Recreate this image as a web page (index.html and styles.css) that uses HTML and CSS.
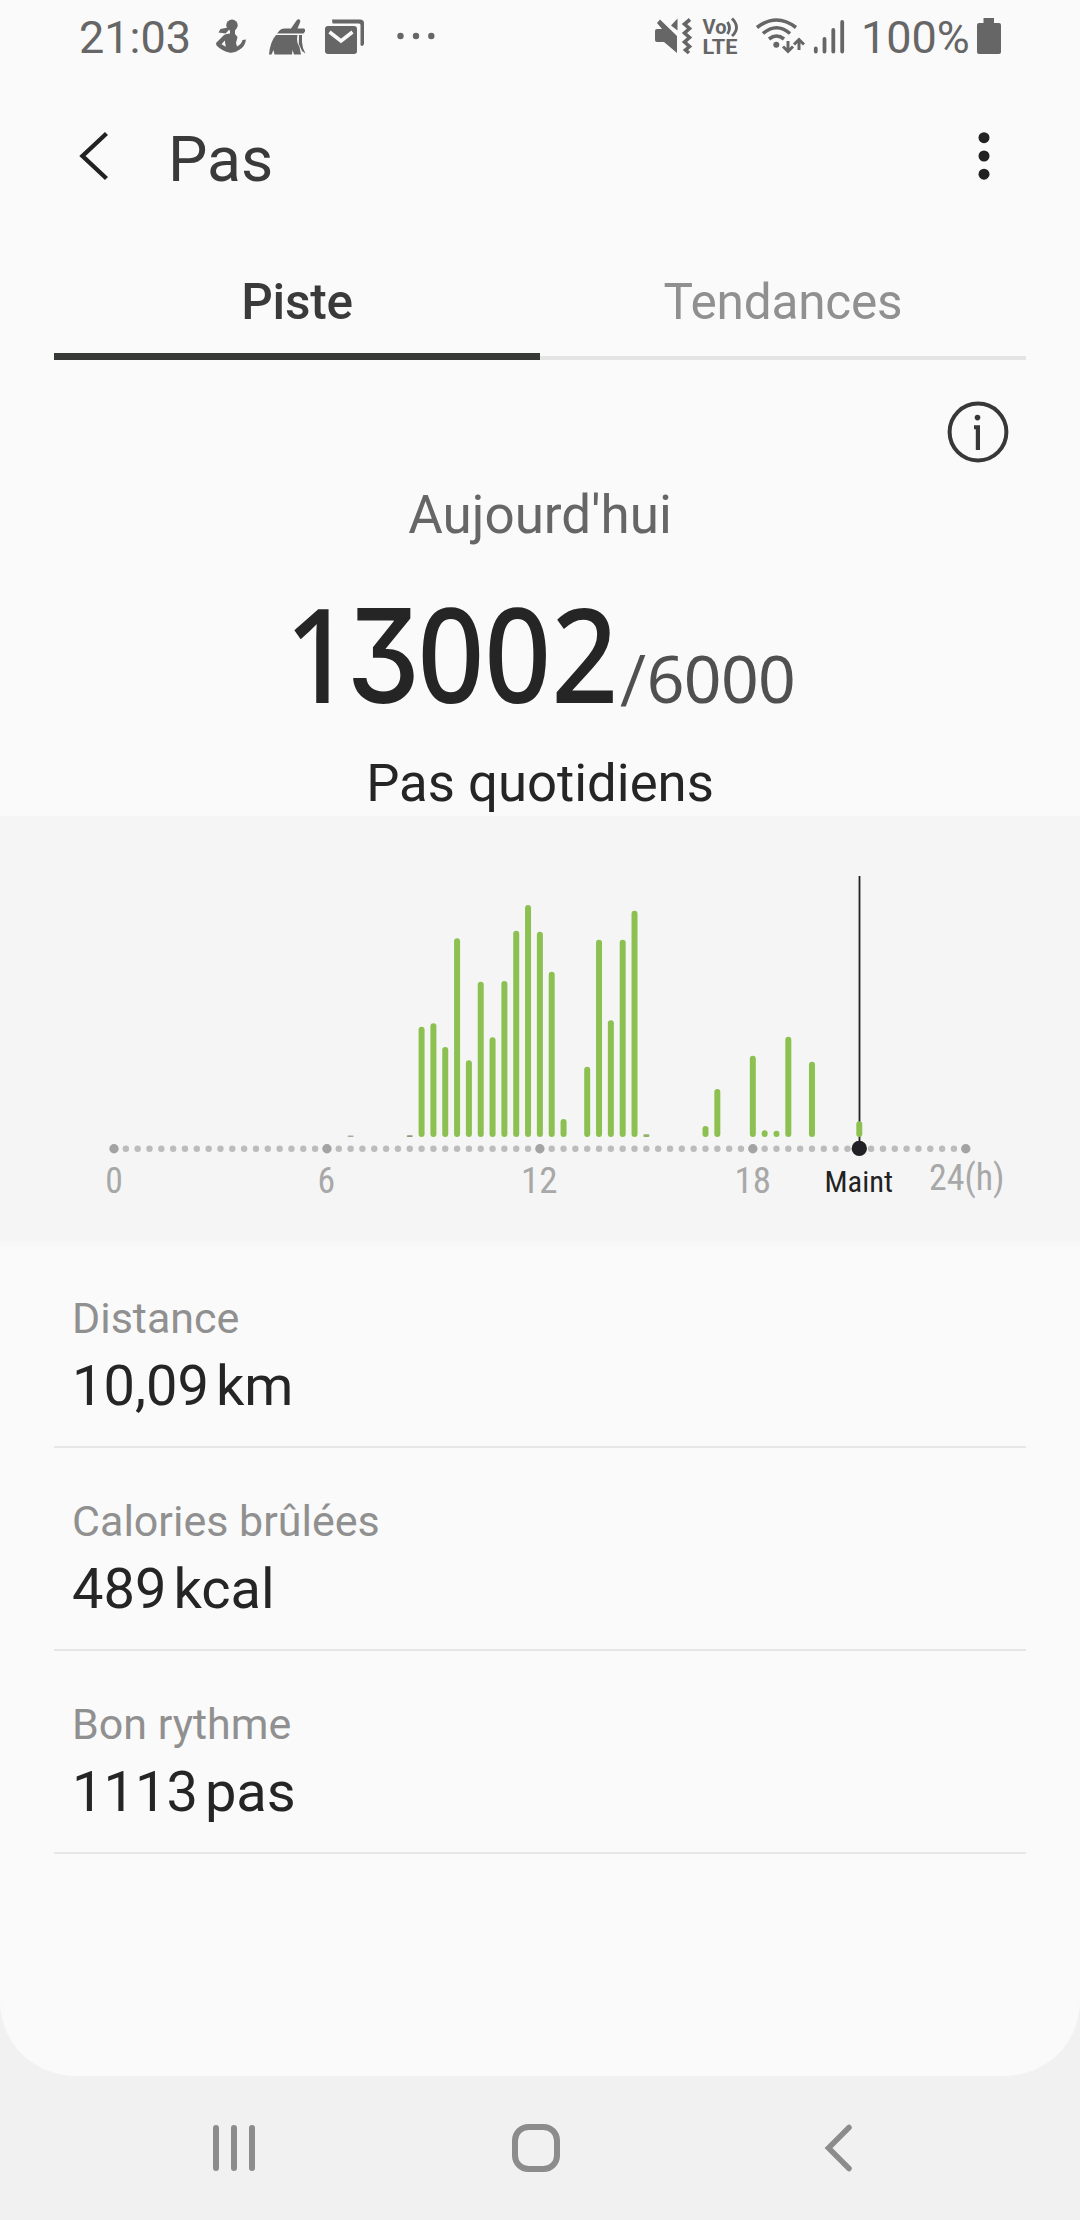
FILE: index.html
```html
<!DOCTYPE html>
<html lang="fr">
<head>
<meta charset="utf-8">
<title>Pas</title>
<link rel="stylesheet" href="styles.css">
</head>
<body>
<div class="screen">
  <main class="panel">
    <div class="status">
      <span class="clock">21:03</span>
      <svg class="status-left" viewBox="210 0 230 75" fill="#666">
        <circle cx="232" cy="25.200" r="5.700"/>
        <path d="M228 27.500 L220.500 29 L218.500 32.500 L225.500 33.500 L228.500 30.500 Z"/>
        <path d="M230 29 H235 V34 L237.500 37 L236 43 L237 46.500 Q241.500 44 242.500 40 L246 39.500 Q245 47 239 50 Q234 53.500 229 52.500 Q222 51 216.500 45.500 L216 43 L224 35 Q226 33.500 230 33.500 Z M224.800 40.500 L221.500 44.200 L225.800 46.800 Z" fill-rule="evenodd"/>
        <path d="M291 28.500 L296.500 20.500 Q298 18.500 299.500 19.500 Q301 20.500 300 22.500 L297.500 28.500 H304 Q305.500 29 305 31.500 L303.500 33.500 H277 L280 30 Q281.500 28.500 284 28.500 Z"/>
        <path d="M276 35 H297.500 Q296.500 39 297.500 43 L301 50 L299.500 47 L301 54.500 H294 L292.500 50 L292 54.500 H274.500 L273.500 50 L271.500 54.500 H269 Q270 42 276 35 Z"/>
        <path d="M299 35 H302 Q301.500 42 303 48 L305.500 53.500 L302 51 L298.800 44 Z"/>
        <path d="M332 19.500 H360 Q364 19.500 364 23 V44 Q363.500 46 361.500 46 L360.500 45 V25 Q360.500 23.500 359 23.500 H332.500 Z"/>
        <rect x="325" y="26" width="32" height="28" rx="3"/>
        <path d="M329.500 32 L341 41 L352.500 32" fill="none" stroke="#fafafa" stroke-width="3.600"/>
        <circle cx="400.500" cy="36" r="3.200"/><circle cx="416" cy="36" r="3.200"/><circle cx="431.300" cy="36" r="3.200"/>
      </svg>
      <svg class="status-right" viewBox="650 0 211 75" fill="#666">
        <path d="M655 31 Q655 29 657 29 H662 L657 23 L660 19.500 L677 36 V53 L664 42 H657 Q655 42 655 40 Z"/>
        <path d="M671 25.500 L677.500 18.500 V30.500 Z"/>
        <path d="M690 19.500 L684.500 24 L689.500 28.500 L684.500 33 L689.500 37.500 L684.500 42 L689.500 46.500 L685.500 50 L689 53" fill="none" stroke="#666" stroke-width="3.600"/>
        <text class="volte" x="702.500" y="33.500" textLength="24" lengthAdjust="spacingAndGlyphs">Vo</text>
        <text class="volte" x="702.500" y="53.500" textLength="35" lengthAdjust="spacingAndGlyphs">LTE</text>
        <g fill="none" stroke="#666" stroke-width="2.900">
          <path d="M727.500 22 Q731.500 28 727.500 34"/><path d="M732 18.500 Q741 27.500 732 36"/>
        </g>
        <g fill="none" stroke="#666" stroke-width="3.600">
          <path d="M757 27.500 Q776.500 12.500 796 27.500"/><path d="M763 33.500 Q776.500 22 790 33.500"/><path d="M769 39 Q776.500 33 784 39"/>
        </g>
        <circle cx="776.300" cy="44.800" r="3"/>
        <g fill="none" stroke="#666" stroke-width="3">
          <path d="M788 41 V51 M783 46.500 L788 51.500 L793 46.500"/><path d="M799 50 V40 M794 44.500 L799 39.500 L804 44.500"/>
        </g>
        <g stroke="#666" stroke-width="3.800" stroke-linecap="round"><path d="M815.800 48.500V51.500M824.500 39V51.500M833.300 30V51.500M842.200 22V51.500"/></g>
      </svg>
      <span class="percent">100%</span>
      <svg class="battery" viewBox="977 0 24 75" fill="#666"><path d="M983.500 18 H994 V23 H999 Q1001 23 1001 25 V52 Q1001 54 999 54 H979 Q977 54 977 52 V25 Q977 23 979 23 H983.500 Z"/></svg>
    </div>

    <header class="header">
      <svg class="back" viewBox="75 75 40 169"><path d="M106.500 133.500 L82.500 156 L106.500 178.500" fill="none" stroke="#222" stroke-width="4.400"/></svg>
      <h1 class="title">Pas</h1>
      <svg class="more" viewBox="970 75 28 169" fill="#222"><circle cx="984" cy="137.700" r="5.500"/><circle cx="984" cy="156" r="5.500"/><circle cx="984" cy="174.200" r="5.500"/></svg>
    </header>

    <nav class="tabs">
      <div class="tab tab-active">Piste</div>
      <div class="tab">Tendances</div>
    </nav>

    <section class="summary">
      <div class="info-row">
        <svg class="info" viewBox="946 400 64 64">
          <circle cx="978" cy="432" r="28.400" fill="none" stroke="#383838" stroke-width="4"/>
          <circle cx="977.500" cy="417.600" r="2.800" fill="#383838"/>
          <path d="M974 425.300 H980 V450 H975.800 V429.300 H974 Z" fill="#383838"/>
        </svg>
      </div>
      <p class="day">Aujourd'hui</p>
      <div class="count">
        <span class="steps">1<span class="flat">3</span>002</span>
        <span class="goal"><span class="slash">/</span>6000</span>
      </div>
      <p class="caption">Pas quotidiens</p>
    </section>

    <svg class="chart" viewBox="0 816 1080 431">
      <g id="ticks"></g>
      <path d="M859.500 876 V1148" stroke="#222226" stroke-width="1.800"/>
      <g id="bars" fill="#8cc152"></g>
      <circle cx="859.300" cy="1148.400" r="7.700" fill="#222226"/>
      <g class="axis">
        <text x="105.200" y="1193" textLength="17.600" lengthAdjust="spacingAndGlyphs">0</text>
        <text x="317.400" y="1193" textLength="17.600" lengthAdjust="spacingAndGlyphs">6</text>
        <text x="521" y="1193" textLength="36.500" lengthAdjust="spacingAndGlyphs">12</text>
        <text x="734.500" y="1193" textLength="36.500" lengthAdjust="spacingAndGlyphs">18</text>
        <text x="929" y="1190" textLength="75.500" lengthAdjust="spacingAndGlyphs">24(h)</text>
        <text class="now" x="824.500" y="1192.300" textLength="68.500" lengthAdjust="spacingAndGlyphs">Maint</text>
      </g>
    </svg>

    <ul class="stats">
      <li class="stat"><span class="label">Distance</span><span class="value">10,09<span class="unit">km</span></span></li>
      <li class="stat"><span class="label">Calories brûlées</span><span class="value">489<span class="unit">kcal</span></span></li>
      <li class="stat"><span class="label">Bon rythme</span><span class="value">1113<span class="unit">pas</span></span></li>
    </ul>
  </main>

  <footer class="navbar">
    <svg class="recents" viewBox="213 2124 42 48" fill="#8c8c8c"><rect x="213" y="2125" width="6" height="46" rx="3"/><rect x="231" y="2125" width="6" height="46" rx="3"/><rect x="249" y="2125" width="6" height="46" rx="3"/></svg>
    <svg class="home" viewBox="512 2124 48 48"><rect x="515" y="2127" width="42" height="42" rx="13.500" fill="none" stroke="#8c8c8c" stroke-width="6"/></svg>
    <svg class="nav-back" viewBox="824 2124 28 48"><path d="M849 2127.500 L828.500 2148 L849 2168.500" fill="none" stroke="#8c8c8c" stroke-width="5.500" stroke-linecap="round"/></svg>
  </footer>
</div>
<script src="chart.js"></script>
</body>
</html>
```
FILE: chart.js
```js
// One slot every 20 minutes, from 0 h (slot 0) to 24 h (slot 72).
const NS = "http://www.w3.org/2000/svg";
const slotX = (i) => 114 + i * 11.83;
const BASE = 1137;

// [slot, bar height]
const bars = [
  [26, 110.3], [27, 113.7], [28, 90], [29, 198.7], [30, 76.7], [31, 155.3],
  [32, 99.7], [33, 156], [34, 206.3], [35, 232], [36, 205.3], [37, 165.3],
  [38, 18], [40, 70.3], [41, 197.3], [42, 116.7], [43, 197.3], [44, 226.3],
  [50, 11], [51, 48], [54, 81.3], [55, 6.7], [56, 6.3], [57, 100.3],
  [59, 75.3], [63, 15.7]
];
const traces = [[20, 1.6, "#a5ad99"], [25, 1.8, "#8a9a78"], [45, 2.8, "#93b36c"]];

function add(parent, name, attrs) {
  const el = document.createElementNS(NS, name);
  for (const key in attrs) el.setAttribute(key, attrs[key]);
  document.getElementById(parent).appendChild(el);
}

for (let i = 0; i <= 72; i++) {
  const major = i % 18 === 0;
  add("ticks", "circle", {
    cx: slotX(i), cy: 1148.8, r: major ? 4.7 : 3.2, fill: major ? "#a3a3a3" : "#bcbcbc"
  });
}
for (const [i, h] of bars) {
  add("bars", "rect", { x: slotX(i) - 3, y: BASE - h, width: 6, height: h, rx: 3 });
}
for (const [i, h, fill] of traces) {
  add("bars", "rect", { x: slotX(i) - 3, y: BASE - h, width: 6, height: h, rx: 1, fill });
}
```
FILE: styles.css
```css
* { box-sizing: border-box; }
body { margin: 0; font-family: Roboto, "Liberation Sans", sans-serif; }
svg { display: block; flex: none; }

.screen { width: 1080px; height: 2220px; background: #f1f1f1; display: flex; flex-direction: column; overflow: hidden; }
.panel { height: 2076px; background: #fafafa; border-radius: 0 0 75px 75px; overflow: hidden; }

.status { display: flex; height: 75px; padding-left: 79px; color: #666; font-size: 45px; line-height: 75px; }
.clock { width: 131px; }
.status-left { width: 230px; height: 75px; }
.status-right { width: 211px; height: 75px; margin-left: 210px; }
.volte { font-size: 21px; font-weight: 700; }
.percent { width: 116px; }
.battery { width: 24px; height: 75px; }

.header { display: flex; height: 169px; padding: 0 82px 0 75px; }
.back { width: 40px; height: 169px; }
.title { flex: 1; margin: 0 0 0 53px; color: #3a3a3a; font-size: 62.5px; font-weight: 400; line-height: 169px; }
.more { width: 28px; height: 169px; }

.tabs { display: flex; margin: 0 54px; height: 116px; }
.tab { flex: 1; text-align: center; font-size: 49.5px; letter-spacing: -.2px; line-height: 116px; color: #909090; box-shadow: inset 0 -4px #e4e4e4; }
.tab-active { color: #3a3a3a; font-weight: 500; box-shadow: inset 0 -7px #373937; }

.summary { height: 456px; display: flex; flex-direction: column; }
.info-row { height: 110px; flex: none; display: flex; justify-content: flex-end; padding: 40px 70px 0 0; }
.info { width: 64px; height: 64px; }
.day, .caption { margin: 0; text-align: center; font-size: 53px; }
.day { height: 90px; line-height: 90px; color: #666; }
.count { display: flex; height: 185px; padding-left: 285px; font-family: "Noto Sans", sans-serif; line-height: 185px; align-items: baseline; white-space: nowrap; }
.steps { width: 335px; font-size: 130px; font-weight: 490; color: #252525; transform: scaleX(.9); transform-origin: 0 0; }
.flat { margin-left: -6px; font-family: Inter, sans-serif; font-weight: 460; font-feature-settings: "cv09"; letter-spacing: -3px; }
.goal { font-size: 66px; color: #505050; letter-spacing: -.6px; line-height: 80px; }
.slash { font-family: Roboto, sans-serif; }
.caption { font-size: 52.7px; line-height: 76px; color: #252525; }

.chart { width: 1080px; height: 431px; background: linear-gradient(#f5f5f5 425px, #f8f8f8 425px); }
.axis { font-family: "Roboto Condensed", Roboto, sans-serif; font-size: 36px; fill: #a8a8a8; }
.now { font-size: 30px; fill: #222; }

.stats { list-style: none; margin: 0 54px; padding: 0; }
.stat { display: flex; flex-direction: column; height: 203px; padding: 43px 0 0 18px; border-bottom: 2px solid #e6e6e6; }
.stat:first-child { height: 201px; padding-top: 41px; }
.label { font-size: 43px; line-height: 60px; color: #909090; }
.value { font-size: 56px; line-height: 76px; color: #252525; }
.unit { margin-left: 7px; }

.navbar { flex: 1; display: flex; align-items: center; padding-left: 213px; }
.recents { width: 42px; height: 48px; }
.home { width: 48px; height: 48px; margin-left: 257px; }
.nav-back { width: 28px; height: 48px; margin-left: 264px; }
```
